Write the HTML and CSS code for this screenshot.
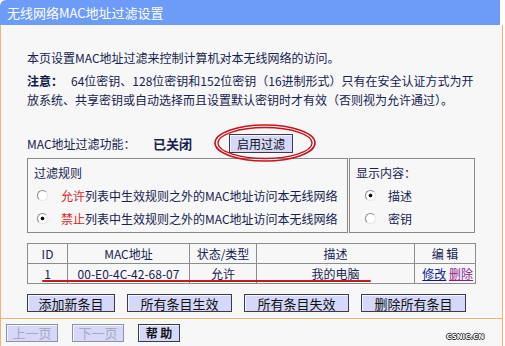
FILE: index.html
```
<!DOCTYPE html>
<html lang="zh-CN">

<head>
    <meta charset="UTF-8">
    <title>无线网络MAC地址过滤设置</title>
    <link rel="stylesheet" href="styles.css">
</head>

<body>
    <div class="page">
        <div class="titlebar">无线网络MAC地址过滤设置</div>
        <div class="panel">
            <p class="intro">本页设置MAC地址过滤来控制计算机对本无线网络的访问。</p>
            <p class="note"><b>注意：</b><span>64位密钥、128位密钥和152位密钥（16进制形式）只有在安全认证方式为开</span><br><span>放系统、共享密钥或自动选择而且设置默认密钥时才有效（否则视为允许通过）。</span></p>

            <div class="status-row">
                <span class="label">MAC地址过滤功能：</span>
                <span class="state">已关闭</span>
                <span class="enable-wrap">
                    <button class="btn btn-enable">启用过滤</button>
                    <svg class="mark-circle" width="104" height="40" viewBox="0 0 104 40">
                        <ellipse cx="52" cy="20" rx="50" ry="18" fill="none" stroke="#c8141c" stroke-width="1.6"/>
                        <ellipse cx="52" cy="20" rx="47" ry="15.5" fill="none" stroke="#c8141c" stroke-width="1.4"/>
                    </svg>
                </span>
            </div>

            <div class="rules">
                <div class="rule-box">
                    <div class="box-title">过滤规则</div>
                    <label class="radio-row"><input type="radio" name="rule"><span class="red">允许</span>列表中生效规则之外的MAC地址访问本无线网络</label>
                    <label class="radio-row"><input type="radio" name="rule" checked><span class="red">禁止</span>列表中生效规则之外的MAC地址访问本无线网络</label>
                </div>
                <div class="show-box">
                    <div class="box-title">显示内容：</div>
                    <label class="radio-row"><input type="radio" name="show" checked>描述</label>
                    <label class="radio-row"><input type="radio" name="show">密钥</label>
                </div>
            </div>

            <div class="list-wrap">
                <table class="list">
                    <tr>
                        <th class="c-id">ID</th>
                        <th class="c-mac">MAC地址</th>
                        <th class="c-state">状态/类型</th>
                        <th class="c-desc">描述</th>
                        <th class="c-edit">编 辑</th>
                    </tr>
                    <tr>
                        <td>1</td>
                        <td>00-E0-4C-42-68-07</td>
                        <td>允许</td>
                        <td>我的电脑</td>
                        <td class="edit"><a href="#" class="lnk">修改</a> <a href="#" class="lnk del">删除</a></td>
                    </tr>
                </table>
                <div class="mark-line"></div>
            </div>

            <div class="actions">
                <button class="btn btn-add">添加新条目</button>
                <button class="btn btn-wide">所有条目生效</button>
                <button class="btn btn-wide">所有条目失效</button>
                <button class="btn btn-wide">删除所有条目</button>
            </div>
        </div>
        <div class="footer">
            <button class="btn btn-page" disabled>上一页</button>
            <button class="btn btn-page" disabled>下一页</button>
            <button class="btn btn-help">帮 助</button>
            <span class="watermark">CSNIC.CN</span>
        </div>
    </div>
</body>

</html>
```

FILE: styles.css
```
body {
    margin: 0;
    background-color: #fff;
    font-family: "Noto Sans CJK SC", "DejaVu Sans", sans-serif;
    font-size: 12px;
    color: #16224e;
}

.page {
    width: 503px;
}

.titlebar {
    width: 493px;
    height: 25px;
    line-height: 25px;
    padding-left: 7px;
    background-color: #6c9cf8;
    border-top-left-radius: 6px;
    color: #fff;
    font-size: 13px;
}

.panel {
    border-left: 1px solid #f2b46e;
    border-right: 1px solid #f2b46e;
    border-bottom: 1px solid #f2b46e;
    background-color: #f7f7f7;
    padding: 23px 26px 6px 26px;
}

.intro {
    margin: 0 0 3px 0;
    line-height: 20px;
}

.note {
    margin: 0;
    line-height: 19px;
    width: 452px;
}

.note b {
    color: #0c1a4a;
    margin-right: 8px;
}

.status-row {
    margin-top: 23px;
    height: 22px;
    display: flex;
    align-items: center;
}

.status-row .label {
    width: 126px;
}

.status-row .state {
    font-weight: bold;
    width: 76px;
    font-size: 13px;
}

.enable-wrap {
    position: relative;
    display: inline-block;
}

.mark-circle {
    position: absolute;
    left: -16px;
    top: -11px;
}

.btn {
    font-family: "Noto Sans CJK SC", "DejaVu Sans", sans-serif;
    font-size: 13px;
    color: #111;
    background-color: #d5d8f8;
    border: 1px solid #3a3a4a;
    box-shadow: inset 1px 1px 0 #f4f4ff;
    padding: 0;
    height: 18px;
    line-height: 15px;
}

.btn-enable {
    width: 64px;
    height: 19px;
    font-size: 12px;
}

.rules {
    display: flex;
    margin-top: 4px;
    height: 75px;
}

.rule-box,
.show-box {
    border: 1px solid #8a8a8a;
    padding: 3px 6px 0 6px;
}

.rule-box {
    width: 307px;
}

.show-box {
    margin-left: 1px;
    width: 112px;
}

.box-title {
    line-height: 22px;
}

.radio-row {
    display: flex;
    align-items: center;
    height: 23px;
    padding-left: 3px;
}

.show-box .radio-row {
    padding-left: 9px;
}

.radio-row input {
    appearance: none;
    width: 11px;
    height: 11px;
    margin: 0 13px 0 0;
    border: 1px solid #8b8b8b;
    border-right-color: #e6e6e6;
    border-bottom-color: #e6e6e6;
    border-radius: 50%;
    background-color: #fff;
}

.show-box .radio-row input {
    margin-right: 12px;
}

.radio-row input:checked {
    background: radial-gradient(circle, #111 0, #111 1.6px, #fff 2.2px);
}

.red {
    color: #e02020;
}

.list-wrap {
    position: relative;
    margin-top: 10px;
}

.list {
    border-collapse: collapse;
    width: 449px;
    background-color: #f7f7f7;
}

.list th,
.list td {
    border: 1px solid #8d8d8d;
    height: 19px;
    padding: 0;
    text-align: center;
    font-weight: normal;
    line-height: 18px;
}

.c-id {
    width: 39px;
}

.c-mac {
    width: 121px;
}

.c-state {
    width: 66px;
}

.c-desc {
    width: 157px;
}

.list td.edit {
    text-align: right;
    padding-right: 2px;
}

.lnk {
    color: #101890;
}

.lnk.del {
    color: #8a1a8a;
}

.mark-line {
    position: absolute;
    left: 15px;
    top: 37px;
    width: 329px;
    height: 2px;
    background-color: #c81820;
    border-radius: 1px;
}

.actions {
    display: flex;
    margin-top: 10px;
    gap: 12px;
}

.btn-add {
    width: 88px;
}

.btn-wide {
    width: 105px;
}

.footer {
    position: relative;
    height: 27px;
    border-left: 1px solid #f2b46e;
    border-right: 1px solid #f2b46e;
    border-bottom: 1px solid #f2b46e;
    background-color: #f7f7f7;
    display: flex;
    align-items: center;
    padding-left: 5px;
    gap: 14px;
}

.btn-page {
    width: 52px;
    color: #a8a8c0;
    border-color: #8e90a8;
}

.btn-help {
    width: 42px;
    font-weight: bold;
    font-size: 12px;
}

.watermark {
    position: absolute;
    right: 18px;
    top: 14px;
    font-family: "DejaVu Sans", sans-serif;
    font-size: 7px;
    font-weight: bold;
    color: #fff;
    text-shadow: 1px 0 0 #333, -1px 0 0 #333, 0 1px 0 #333, 0 -1px 0 #333;
}
```
